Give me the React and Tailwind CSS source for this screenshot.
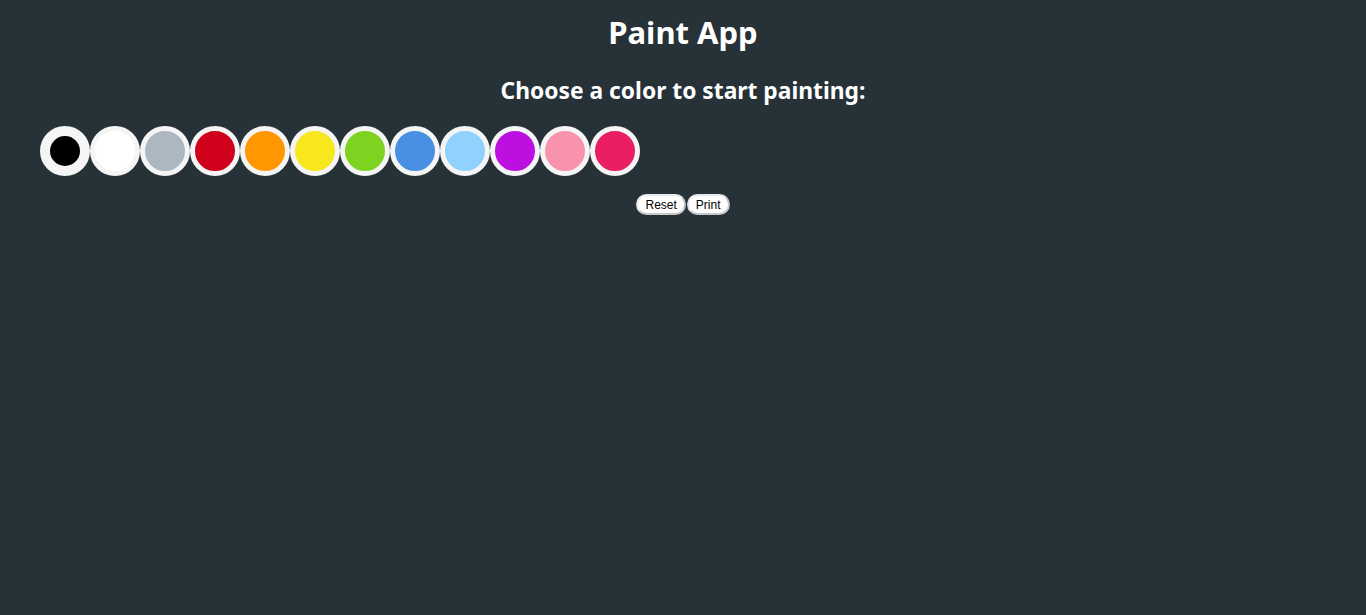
const colors = [
  '#000000',
  '#ffffff',
  '#adb7c2',
  '#d0021b',
  '#ff9800',
  '#f8e71c',
  '#7ed321',
  '#4a90e2',
  '#90d2fe',
  '#bd10e0',
  '#f993ad',
  '#ea1f63',
];

export default function App() {
  return (
    <div className="min-h-screen bg-[#263238] text-white font-['Noto_Sans',sans-serif]">
      <h1 className="pt-[13px] text-center text-[31px] font-bold leading-[38px]">Paint App</h1>
      <h2 className="mt-[25px] text-center text-[22.8px] font-bold leading-[30px]">
        Choose a color to start painting:
      </h2>
      <div className="mt-[20px] flex px-[40px]">
        {colors.map((c, i) => (
          <div
            key={c}
            className={
              'h-[50px] w-[50px] rounded-full border-[#f5f5f5] ' +
              (i === 0 ? 'border-[10px]' : 'border-[5px]')
            }
            style={{ backgroundColor: c }}
          />
        ))}
      </div>
      <div className="mt-[18px] flex justify-center font-['Liberation_Sans',Arial,sans-serif] text-[12px] text-black">
        <button className="h-[21px] rounded-full border-2 border-[#c8c8c8] border-l-[#e8e8e8] border-t-[#e8e8e8] bg-white px-[7px] leading-none">
          Reset
        </button>
        <button className="ml-[1px] h-[21px] rounded-full border-2 border-[#c8c8c8] border-l-[#e8e8e8] border-t-[#e8e8e8] bg-white px-[7px] leading-none">
          Print
        </button>
      </div>
    </div>
  );
}
